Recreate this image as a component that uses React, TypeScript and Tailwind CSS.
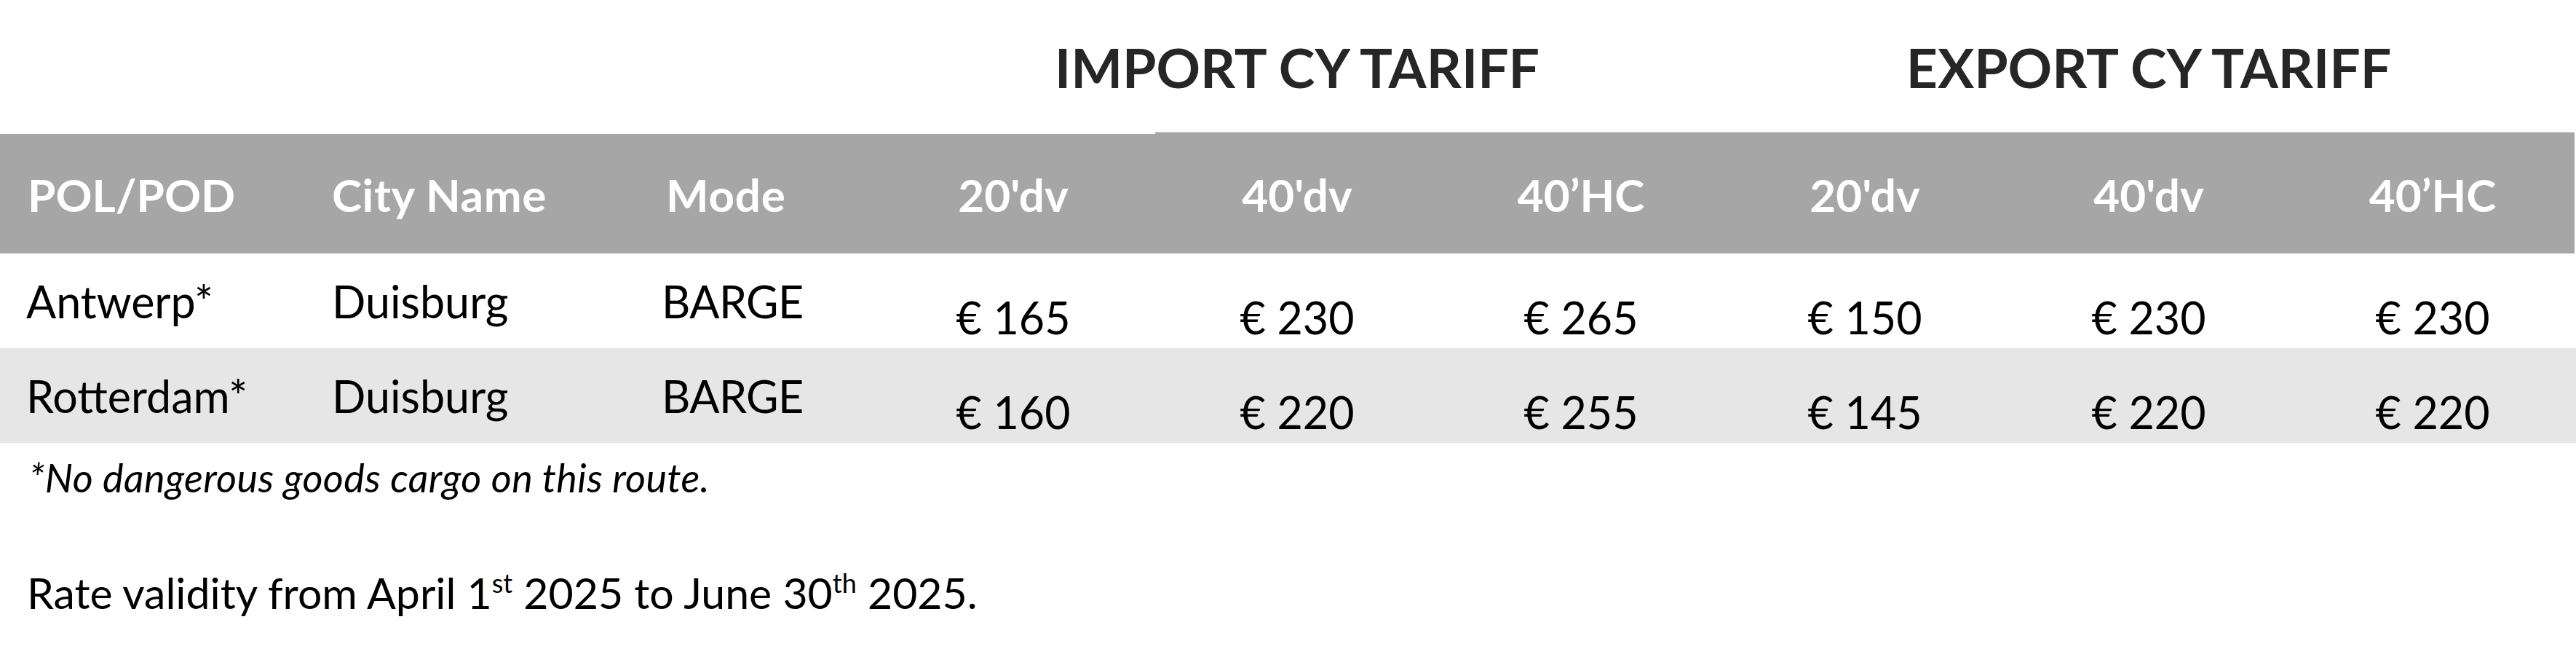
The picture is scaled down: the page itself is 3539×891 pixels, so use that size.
import React from "react";

const cols = "grid grid-cols-[420px_453px_324px_repeat(6,390px)]";

const headers = ["20'dv", "40'dv", "40\u2019HC", "20'dv", "40'dv", "40\u2019HC"];

const rows = [
  { pol: "Antwerp*", city: "Duisburg", mode: "BARGE", vals: [165, 230, 265, 150, 230, 230], bg: "bg-white" },
  { pol: "Rotterdam*", city: "Duisburg", mode: "BARGE", vals: [160, 220, 255, 145, 220, 220], bg: "bg-[#e6e6e6]" },
];

export default function App() {
  return (
    <div className="w-[3539px] h-[891px] bg-white font-['Lato','Liberation_Sans',sans-serif] text-black leading-none">
      {/* Titles */}
      <div className="grid grid-cols-[1197px_1170px_1170px] h-[181px]">
        <div />
        <div className="text-center font-bold text-[75px] text-[#262626] pt-[55px]">IMPORT CY TARIFF</div>
        <div className="text-center font-bold text-[75px] text-[#262626] pt-[55px]">EXPORT CY TARIFF</div>
      </div>

      {/* Header */}
      <div className={`${cols} h-[167px] text-white font-bold text-[62px]`}>
        <div className="bg-[#a6a6a6] border-t-[3px] border-white pl-[38px] pt-[52px]">POL/POD</div>
        <div className="bg-[#a6a6a6] border-t-[3px] border-white pl-[36px] pt-[52px] tracking-[0.6px]">City Name</div>
        <div className="bg-[#a6a6a6] border-t-[3px] border-white pl-[42px] pt-[52px] tracking-[0.8px]">Mode</div>
        {headers.map((h, i) => (
          <div
            key={i}
            className={`bg-[#a6a6a6] text-center ${
              i === 0 ? "border-t-[3px] border-white pt-[52px]" : "border-t border-[#d4d4d4] pt-[54px]"
            }`}
          >
            {h}
          </div>
        ))}
      </div>

      {/* Body */}
      {rows.map((r, ri) => (
        <div key={ri} className={`${cols} h-[130px] ${r.bg} text-[61px]`}>
          <div className="pl-[36px] pt-[35px]">{r.pol}</div>
          <div className="pl-[36px] pt-[35px]">{r.city}</div>
          <div className="pl-[36px] pt-[35px] tracking-[-0.6px]">{r.mode}</div>
          {r.vals.map((v, vi) => (
            <div key={vi} className="text-center pt-[57px]">
              € {v}
            </div>
          ))}
        </div>
      ))}

      {/* Notes */}
      <div className="pl-[40px] pt-[21px] italic text-[54px] tracking-[0.4px]">*No dangerous goods cargo on this route.</div>
      <div className="pl-[37px] pt-[101px] text-[59px]">
        Rate validity from April 1<sup className="text-[36px] leading-[0] top-[-22px]">st</sup> 2025 to June 30
        <sup className="text-[36px] leading-[0] top-[-22px]">th</sup> 2025.
      </div>
    </div>
  );
}
